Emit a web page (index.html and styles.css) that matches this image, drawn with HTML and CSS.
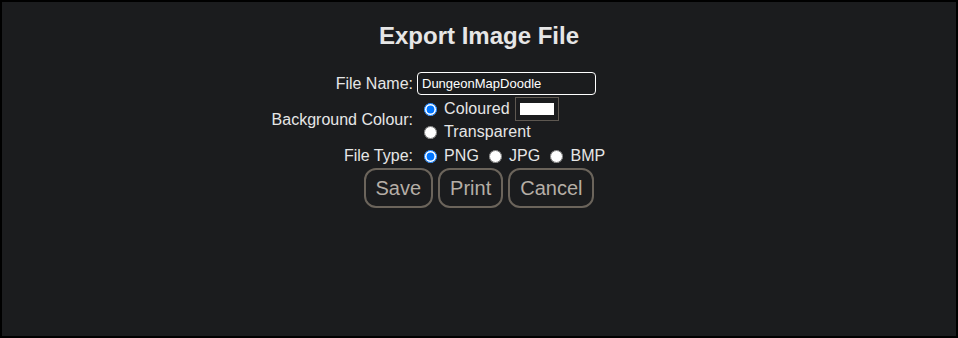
FILE: index.html
```html
<html>
    <head>
        <link rel="stylesheet" href="styles.css">
    </head>
    <body>
        <div class="dialog">
            <h2 class="title">Export Image File</h2>
            <div class="form">
                <label class="label" for="file-name">File Name:</label>
                <div class="field">
                    <input class="name-input" id="file-name" type="text" value="DungeonMapDoodle">
                </div>

                <div class="label">Background Colour:</div>
                <div class="field stack">
                    <div class="line">
                        <input type="radio" name="bg" id="bg-col" checked>
                        <label for="bg-col">Coloured</label>
                        <span class="swatch"><span class="swatch-fill"></span></span>
                    </div>
                    <div class="line">
                        <input type="radio" name="bg" id="bg-trans">
                        <label for="bg-trans">Transparent</label>
                    </div>
                </div>

                <div class="label">File Type:</div>
                <div class="field line">
                    <input type="radio" name="type" id="t-png" checked>
                    <label for="t-png">PNG</label>
                    <input type="radio" name="type" id="t-jpg">
                    <label for="t-jpg">JPG</label>
                    <input type="radio" name="type" id="t-bmp">
                    <label for="t-bmp">BMP</label>
                </div>
            </div>
            <div class="buttons">
                <button class="btn">Save</button>
                <button class="btn">Print</button>
                <button class="btn">Cancel</button>
            </div>
        </div>
    </body>
</html>
```

FILE: styles.css
```css
body{
    margin: 0;
    font-family: "Liberation Sans", Arial, sans-serif;
}

.dialog{
    box-sizing: border-box;
    width: 958px;
    height: 338px;
    border: 2px solid #000;
    background-color: #1b1c1e;
    color: #e6e6e6;
}

.title{
    margin: 20px 0 0 0;
    font-size: 24px;
    line-height: 28px;
    text-align: center;
}

.form{
    display: grid;
    grid-template-columns: 411px auto;
    column-gap: 4px;
    row-gap: 2px;
    margin-top: 22px;
    font-size: 16px;
}

.label{
    text-align: right;
    align-self: center;
}

.field{
    display: flex;
    align-items: center;
}

.stack{
    flex-direction: column;
    align-items: flex-start;
}

.line{
    display: flex;
    align-items: center;
    height: 22px;
}

.stack .line:first-child{
    height: 24px;
}

.line input{
    margin: 0 7px 0 7px;
    width: 13px;
    height: 13px;
}

.line label{
    margin-right: 3px;
    letter-spacing: 0.1px;
}

.name-input{
    box-sizing: border-box;
    width: 179px;
    height: 23px;
    padding: 0 4px;
    border: 1px solid #fff;
    border-radius: 4px;
    background-color: #1b1c1e;
    color: #fff;
    font-family: "Liberation Sans", Arial, sans-serif;
    font-size: 13px;
    outline: none;
}

.swatch{
    box-sizing: border-box;
    display: flex;
    width: 44px;
    height: 24px;
    padding: 5px 4px;
    margin-left: 2px;
    border: 1px solid #5e5851;
}

.swatch-fill{
    flex-grow: 1;
    background-color: #fff;
}

.buttons{
    display: flex;
    justify-content: center;
    gap: 5px;
    margin-top: 1px;
}

.btn{
    height: 40px;
    padding: 0 10px;
    border: 2px solid #6b645b;
    border-radius: 12px;
    background: transparent;
    color: #b5aea6;
    font-family: "Liberation Sans", Arial, sans-serif;
    font-size: 20px;
}
```
